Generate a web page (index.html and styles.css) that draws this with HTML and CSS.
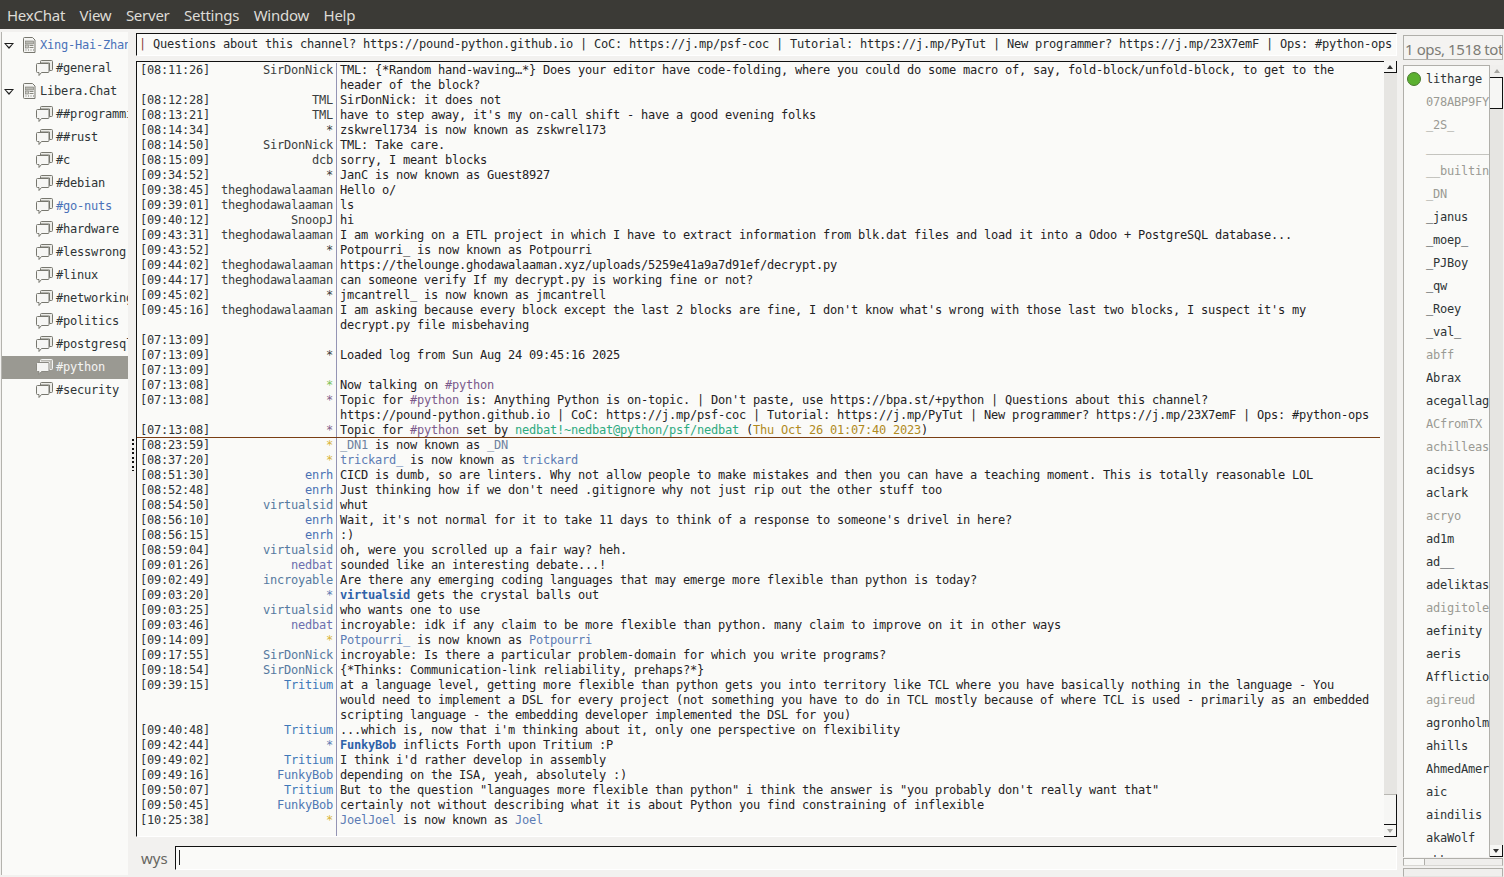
FILE: index.html
```html
<!DOCTYPE html>
<html lang="en">
<head>
<meta charset="utf-8">
<title>HexChat</title>
<link rel="stylesheet" href="styles.css">
</head>
<body>
<svg class="defs" width="0" height="0" aria-hidden="true">
  <symbol id="srv" viewBox="0 0 16 17">
    <path d="M3.500.5h8l1.500 1.500 1 1v12.500h-10.500a1 1 0 0 1-1-1V1.500a1 1 0 0 1 1-1z" fill="#f4f4f2" stroke="#77776f"/>
    <rect x="4.500" y="4" width="8" height="3" fill="#b9b9b3" stroke="#77776f" stroke-width=".6"/>
    <rect x="4.500" y="8" width="3" height="3" fill="#c9c9c3" stroke="#77776f" stroke-width=".6"/>
    <rect x="8.500" y="8" width="4" height="1" fill="#88887f"/>
    <rect x="8.500" y="10" width="4" height="1" fill="#88887f"/>
    <path d="M4.500 13h1M7 13h1M9.500 13h1M12 13h1" stroke="#77776f"/>
  </symbol>
  <symbol id="chan" viewBox="0 0 17 17">
    <path d="M4.500 3V1.500a1 1 0 0 1 1-1h10a1 1 0 0 1 1 1v8a1 1 0 0 1-1 1h-2V3z" fill="#ecece8" stroke="#77776f"/>
    <path d="M1.500 3.500h10.500a1 1 0 0 1 1 1v7a1 1 0 0 1-1 1H5.500l-2.500 3v-3H1.500a1 1 0 0 1-1-1v-7a1 1 0 0 1 1-1z" fill="#f6f6f4" stroke="#77776f"/>
  </symbol>
  <symbol id="chan-sel" viewBox="0 0 17 17">
    <path d="M4.500 3V1.500a1 1 0 0 1 1-1h10a1 1 0 0 1 1 1v8a1 1 0 0 1-1 1h-2V3z" fill="#b9b8b2" stroke="#f4f4f2"/>
    <path d="M1.500 3.500h10.500a1 1 0 0 1 1 1v7a1 1 0 0 1-1 1H5.500l-2.500 3v-3H1.500a1 1 0 0 1-1-1v-7a1 1 0 0 1 1-1z" fill="#f4f4f2" stroke="#8a8982"/>
  </symbol>
</svg>

<nav class="menubar">
  <span class="menu">HexChat</span><span class="menu">View</span><span class="menu">Server</span><span class="menu">Settings</span><span class="menu">Window</span><span class="menu">Help</span>
</nav>

<div class="main">
  <aside class="tree">
    <div class="net"><i class="exp"></i><svg class="ico16"><use href="#srv"/></svg><span class="lbl hl">Xing-Hai-Zhan</span></div>
    <div class="ch"><svg class="ico17"><use href="#chan"/></svg><span class="lbl">#general</span></div>
    <div class="net"><i class="exp"></i><svg class="ico16"><use href="#srv"/></svg><span class="lbl">Libera.Chat</span></div>
    <div class="ch"><svg class="ico17"><use href="#chan"/></svg><span class="lbl">##programming</span></div>
    <div class="ch"><svg class="ico17"><use href="#chan"/></svg><span class="lbl">##rust</span></div>
    <div class="ch"><svg class="ico17"><use href="#chan"/></svg><span class="lbl">#c</span></div>
    <div class="ch"><svg class="ico17"><use href="#chan"/></svg><span class="lbl">#debian</span></div>
    <div class="ch"><svg class="ico17"><use href="#chan"/></svg><span class="lbl hl">#go-nuts</span></div>
    <div class="ch"><svg class="ico17"><use href="#chan"/></svg><span class="lbl">#hardware</span></div>
    <div class="ch"><svg class="ico17"><use href="#chan"/></svg><span class="lbl">#lesswrong</span></div>
    <div class="ch"><svg class="ico17"><use href="#chan"/></svg><span class="lbl">#linux</span></div>
    <div class="ch"><svg class="ico17"><use href="#chan"/></svg><span class="lbl">#networking</span></div>
    <div class="ch"><svg class="ico17"><use href="#chan"/></svg><span class="lbl">#politics</span></div>
    <div class="ch"><svg class="ico17"><use href="#chan"/></svg><span class="lbl">#postgresql</span></div>
    <div class="ch sel"><svg class="ico17"><use href="#chan-sel"/></svg><span class="lbl">#python</span></div>
    <div class="ch"><svg class="ico17"><use href="#chan"/></svg><span class="lbl">#security</span></div>
  </aside>

  <div class="handle"><div class="dots"></div></div>

  <section class="center">
    <div class="topic"><span class="bar">|</span> Questions about this channel? https://pound-python.github.io | CoC: https://j.mp/psf-coc | Tutorial: https://j.mp/PyTut | New programmer? https://j.mp/23X7emF | Ops: #python-ops</div>

    <div class="chatwrap">
      <div class="chat">
        <div class="row"><span class="ts">[08:11:26]</span><span class="nick">SirDonNick</span><span class="msg">TML: {*Random hand-waving…*} Does your editor have code-folding, where you could do some macro of, say, fold-block/unfold-block, to get to the header of the block?</span></div>
        <div class="row"><span class="ts">[08:12:28]</span><span class="nick">TML</span><span class="msg">SirDonNick: it does not</span></div>
        <div class="row"><span class="ts">[08:13:21]</span><span class="nick">TML</span><span class="msg">have to step away, it's my on-call shift - have a good evening folks</span></div>
        <div class="row"><span class="ts">[08:14:34]</span><span class="nick">*</span><span class="msg">zskwrel1734 is now known as zskwrel173</span></div>
        <div class="row"><span class="ts">[08:14:50]</span><span class="nick">SirDonNick</span><span class="msg">TML: Take care.</span></div>
        <div class="row"><span class="ts">[08:15:09]</span><span class="nick">dcb</span><span class="msg">sorry, I meant blocks</span></div>
        <div class="row"><span class="ts">[09:34:52]</span><span class="nick">*</span><span class="msg">JanC is now known as Guest8927</span></div>
        <div class="row"><span class="ts">[09:38:45]</span><span class="nick">theghodawalaaman</span><span class="msg">Hello o/</span></div>
        <div class="row"><span class="ts">[09:39:01]</span><span class="nick">theghodawalaaman</span><span class="msg">ls</span></div>
        <div class="row"><span class="ts">[09:40:12]</span><span class="nick">SnoopJ</span><span class="msg">hi</span></div>
        <div class="row"><span class="ts">[09:43:31]</span><span class="nick">theghodawalaaman</span><span class="msg">I am working on a ETL project in which I have to extract information from blk.dat files and load it into a Odoo + PostgreSQL database...</span></div>
        <div class="row"><span class="ts">[09:43:52]</span><span class="nick">*</span><span class="msg">Potpourri_ is now known as Potpourri</span></div>
        <div class="row"><span class="ts">[09:44:02]</span><span class="nick">theghodawalaaman</span><span class="msg">https://thelounge.ghodawalaaman.xyz/uploads/5259e41a9a7d91ef/decrypt.py</span></div>
        <div class="row"><span class="ts">[09:44:17]</span><span class="nick">theghodawalaaman</span><span class="msg">can someone verify If my decrypt.py is working fine or not?</span></div>
        <div class="row"><span class="ts">[09:45:02]</span><span class="nick">*</span><span class="msg">jmcantrell_ is now known as jmcantrell</span></div>
        <div class="row"><span class="ts">[09:45:16]</span><span class="nick">theghodawalaaman</span><span class="msg">I am asking because every block except the last 2 blocks are fine, I don't know what's wrong with those last two blocks, I suspect it's my decrypt.py file misbehaving</span></div>
        <div class="row"><span class="ts">[07:13:09]</span><span class="nick"></span><span class="msg">&nbsp;</span></div>
        <div class="row"><span class="ts">[07:13:09]</span><span class="nick">*</span><span class="msg">Loaded log from Sun Aug 24 09:45:16 2025</span></div>
        <div class="row"><span class="ts">[07:13:09]</span><span class="nick"></span><span class="msg">&nbsp;</span></div>
        <div class="row"><span class="ts">[07:13:08]</span><span class="nick s-green">*</span><span class="msg">Now talking on <span class="chn">#python</span></span></div>
        <div class="row"><span class="ts">[07:13:08]</span><span class="nick s-purple">*</span><span class="msg">Topic for <span class="chn">#python</span> is: Anything Python is on-topic. | Don't paste, use https://bpa.st/+python | Questions about this channel? <span class="url">https://pound-python.github.io</span> | CoC: https://j.mp/psf-coc | Tutorial: https://j.mp/PyTut | New programmer? https://j.mp/23X7emF | Ops: #python-ops</span></div>
        <div class="row"><span class="ts">[07:13:08]</span><span class="nick s-purple">*</span><span class="msg">Topic for <span class="chn">#python</span> set by <span class="who">nedbat!~nedbat@python/psf/nedbat</span> (<span class="when">Thu Oct 26 01:07:40 2023</span>)</span></div>
        <div class="row mark"><span class="ts">[08:23:59]</span><span class="nick s-yellow">*</span><span class="msg"><span class="n-a">_DN1</span> is now known as <span class="n-a">_DN</span></span></div>
        <div class="row"><span class="ts">[08:37:20]</span><span class="nick s-yellow">*</span><span class="msg"><span class="n-b">trickard_</span> is now known as <span class="n-b">trickard</span></span></div>
        <div class="row"><span class="ts">[08:51:30]</span><span class="nick n-e">enrh</span><span class="msg">CICD is dumb, so are linters. Why not allow people to make mistakes and then you can have a teaching moment. This is totally reasonable LOL</span></div>
        <div class="row"><span class="ts">[08:52:48]</span><span class="nick n-e">enrh</span><span class="msg">Just thinking how if we don't need .gitignore why not just rip out the other stuff too</span></div>
        <div class="row"><span class="ts">[08:54:50]</span><span class="nick n-v">virtualsid</span><span class="msg">whut</span></div>
        <div class="row"><span class="ts">[08:56:10]</span><span class="nick n-e">enrh</span><span class="msg">Wait, it's not normal for it to take 11 days to think of a response to someone's drivel in here?</span></div>
        <div class="row"><span class="ts">[08:56:15]</span><span class="nick n-e">enrh</span><span class="msg">:)</span></div>
        <div class="row"><span class="ts">[08:59:04]</span><span class="nick n-v">virtualsid</span><span class="msg">oh, were you scrolled up a fair way? heh.</span></div>
        <div class="row"><span class="ts">[09:01:26]</span><span class="nick n-n">nedbat</span><span class="msg">sounded like an interesting debate...!</span></div>
        <div class="row"><span class="ts">[09:02:49]</span><span class="nick n-v">incroyable</span><span class="msg">Are there any emerging coding languages that may emerge more flexible than python is today?</span></div>
        <div class="row"><span class="ts">[09:03:20]</span><span class="nick s-blue">*</span><span class="msg"><b class="act">virtualsid</b> gets the crystal balls out</span></div>
        <div class="row"><span class="ts">[09:03:25]</span><span class="nick n-v">virtualsid</span><span class="msg">who wants one to use</span></div>
        <div class="row"><span class="ts">[09:03:46]</span><span class="nick n-n">nedbat</span><span class="msg">incroyable: idk if any claim to be more flexible than python. many claim to improve on it in other ways</span></div>
        <div class="row"><span class="ts">[09:14:09]</span><span class="nick s-yellow">*</span><span class="msg"><span class="n-b">Potpourri_</span> is now known as <span class="n-b">Potpourri</span></span></div>
        <div class="row"><span class="ts">[09:17:55]</span><span class="nick n-v">SirDonNick</span><span class="msg">incroyable: Is there a particular problem-domain for which you write programs?</span></div>
        <div class="row"><span class="ts">[09:18:54]</span><span class="nick n-v">SirDonNick</span><span class="msg">{*Thinks: Communication-link reliability, prehaps?*}</span></div>
        <div class="row"><span class="ts">[09:39:15]</span><span class="nick n-t">Tritium</span><span class="msg">at a language level, getting more flexible than python gets you into territory like TCL where you have basically nothing in the language - You would need to implement a DSL for every project (not something you have to do in TCL mostly because of where TCL is used - primarily as an embedded scripting language - the embedding developer implemented the DSL for you)</span></div>
        <div class="row"><span class="ts">[09:40:48]</span><span class="nick n-t">Tritium</span><span class="msg">...which is, now that i'm thinking about it, only one perspective on flexibility</span></div>
        <div class="row"><span class="ts">[09:42:44]</span><span class="nick s-blue">*</span><span class="msg"><b class="act">FunkyBob</b> inflicts Forth upon Tritium :P</span></div>
        <div class="row"><span class="ts">[09:49:02]</span><span class="nick n-t">Tritium</span><span class="msg">I think i'd rather develop in assembly</span></div>
        <div class="row"><span class="ts">[09:49:16]</span><span class="nick n-f">FunkyBob</span><span class="msg">depending on the ISA, yeah, absolutely :)</span></div>
        <div class="row"><span class="ts">[09:50:07]</span><span class="nick n-t">Tritium</span><span class="msg">But to the question "languages more flexible than python" i think the answer is "you probably don't really want that"</span></div>
        <div class="row"><span class="ts">[09:50:45]</span><span class="nick n-f">FunkyBob</span><span class="msg">certainly not without describing what it is about Python you find constraining of inflexible</span></div>
        <div class="row"><span class="ts">[10:25:38]</span><span class="nick s-yellow">*</span><span class="msg"><span class="n-b">JoelJoel</span> is now known as <span class="n-b">Joel</span></span></div>
        <div class="row fill"><span class="ts"></span><span class="nick"></span><span class="msg"></span></div>
      </div>
      <div class="vscroll">
        <div class="sbtn up"><i class="tri-up"></i></div>
        <div class="trough"></div>
        <div class="thumb"></div>
        <div class="sbtn down"><i class="tri-down dim"></i></div>
      </div>
    </div>

    <div class="inputbar">
      <span class="mynick">wys</span>
      <div class="entry"><i class="caret"></i></div>
    </div>
  </section>

  <aside class="side">
    <div class="count"><span>1 ops, 1518 total</span></div>
    <div class="userwrap">
      <div class="users">
        <div class="u"><i class="dot"></i><span>litharge</span></div>
        <div class="u away"><span>078ABP9FY</span></div>
        <div class="u away"><span>_2S_</span></div>
        <div class="u away"><span>____________</span></div>
        <div class="u away"><span>__builtin__</span></div>
        <div class="u away"><span>_DN</span></div>
        <div class="u"><span>_janus</span></div>
        <div class="u"><span>_moep_</span></div>
        <div class="u"><span>_PJBoy</span></div>
        <div class="u"><span>_qw</span></div>
        <div class="u"><span>_Roey</span></div>
        <div class="u"><span>_val_</span></div>
        <div class="u away"><span>abff</span></div>
        <div class="u"><span>Abrax</span></div>
        <div class="u"><span>acegallagher</span></div>
        <div class="u away"><span>ACfromTX</span></div>
        <div class="u away"><span>achilleas</span></div>
        <div class="u"><span>acidsys</span></div>
        <div class="u"><span>aclark</span></div>
        <div class="u away"><span>acryo</span></div>
        <div class="u"><span>ad1m</span></div>
        <div class="u"><span>ad__</span></div>
        <div class="u"><span>adeliktas</span></div>
        <div class="u away"><span>adigitoler</span></div>
        <div class="u"><span>aefinity</span></div>
        <div class="u"><span>aeris</span></div>
        <div class="u"><span>Afflictions</span></div>
        <div class="u away"><span>agireud</span></div>
        <div class="u"><span>agronholm</span></div>
        <div class="u"><span>ahills</span></div>
        <div class="u"><span>AhmedAmer</span></div>
        <div class="u"><span>aic</span></div>
        <div class="u"><span>aindilis</span></div>
        <div class="u"><span>akaWolf</span></div>
        <div class="u"><span>akk</span></div>
      </div>
      <div class="vscroll small">
        <div class="sbtn up"><i class="tri-up dim"></i></div>
        <div class="thumb top"></div>
        <div class="trough"></div>
        <div class="sbtn down"><i class="tri-down"></i></div>
      </div>
    </div>
    <div class="hscroll"><div class="hthumb"></div></div>
    <div class="hostbox"></div>
  </aside>
</div>
</body>
</html>
```

FILE: styles.css
```css
* { box-sizing: border-box; }
html, body { margin: 0; height: 877px; overflow: hidden; }
body {
  display: flex;
  flex-direction: column;
  background: #f2f1ef;
  color: #2e3436;
  font-family: "DejaVu Sans Mono", monospace;
  font-size: 12px;
  letter-spacing: -0.224px;
  line-height: 15px;
}
.defs { position: absolute; }

.menubar {
  flex: none;
  height: 29px;
  background: #3b3a36;
  display: flex;
  align-items: center;
  padding: 2px 0 0 0;
  font-family: "Noto Sans", sans-serif;
  font-size: 15px;
  letter-spacing: -0.25px;
  color: #dedcd6;
}
.menu { padding: 0 7px; margin-right: 0.5px; }

.main { flex: 1; display: flex; min-height: 0; }

.tree {
  flex: none;
  width: 127px;
  margin: 3px 1px 2px 1px;
  background: #fafaf8;
  border-left: 1px solid #b4b3ae;
  padding-top: 2px;
  overflow: hidden;
}
.net, .ch {
  height: 23px;
  display: flex;
  align-items: center;
  white-space: nowrap;
  overflow: hidden;
}
.net { padding-left: 2px; }
.ch { padding-left: 34px; }
.exp {
  flex: none;
  width: 0; height: 0;
  border-left: 5px solid transparent;
  border-right: 5px solid transparent;
  border-top: 6px solid #1c1c1c;
  margin-right: 7px;
  position: relative;
}
.exp::after {
  content: "";
  position: absolute;
  left: -3px; top: -5px;
  width: 0; height: 0;
  border-left: 3px solid transparent;
  border-right: 3px solid transparent;
  border-top: 3.600px solid #fafaf8;
}
.ico16 { flex: none; width: 16px; height: 17px; margin-right: 3px; }
.ico17 { flex: none; width: 17px; height: 17px; margin-right: 3px; }
.lbl { color: #2e3436; }
.lbl.hl { color: #4a72b8; }
.sel { background: #9a9992; }
.sel .lbl { color: #f4f4f2; }

.handle { flex: none; width: 7px; display: flex; align-items: center; justify-content: center; }
.dots {
  width: 2px;
  height: 32px;
  margin-top: 4px;
  background: repeating-linear-gradient(to bottom, #111 0 2px, transparent 2px 4.500px);
}

.center { flex: none; width: 1261px; display: flex; flex-direction: column; padding-top: 4px; }
.topic {
  flex: none;
  height: 23px;
  border-top: 1.500px solid #111;
  border-left: 1px solid #111;
  border-right: 1px solid #fff;
  border-bottom: 1px solid #fff;
  background: #fafaf8;
  padding: 3px 0 0 2px;
  white-space: nowrap;
  overflow: hidden;
  color: #26292b;
}
.bar { color: #8a3a3a; }

.chatwrap { flex: none; height: 776px; margin-top: 5px; display: flex; }
.chat {
  flex: 1;
  min-width: 0;
  display: flex;
  flex-direction: column;
  background: #fafaf8;
  border-top: 1px solid #111;
  border-left: 1px solid #111;
  border-bottom: 1px solid #fff;
  padding-top: 1px;
}
.row { display: flex; flex: none; padding-left: 3px; }
.row.fill { flex: 1; }
.row.mark { box-shadow: 0 -1px 0 #7a3e14; margin-right: 4px; margin-left: 0; }
.row.mark .msg { padding-right: 8px; }
.ts { flex: none; width: 70px; color: #2e3436; }
.nick { flex: none; width: 126px; text-align: right; padding-right: 3px; white-space: nowrap; color: #3a3e40; }
.msg {
  flex: 1;
  min-width: 0;
  border-left: 1px solid #9494b4;
  padding: 0 12px 0 3px;
  color: #1f2224;
}
.url { white-space: nowrap; }
.chn { color: #7c5a8c; }
.who { color: #2eaa80; }
.when { color: #b08a1e; }
.s-green { color: #7cc25c; }
.s-purple { color: #80608c; }
.s-yellow { color: #d8b53c; }
.s-blue { color: #5c7cb4; }
.n-a { color: #6f82a0; }
.n-b { color: #5c7cb4; }
.n-e { color: #4a72b4; }
.n-v { color: #55799f; }
.n-n { color: #6c70ae; }
.n-t { color: #3f78b8; }
.n-f { color: #4f78b4; }
.act { color: #2f62a8; font-weight: bold; }

.vscroll { flex: none; width: 13px; display: flex; flex-direction: column; background: #e6e5e2; }
.trough { flex: 1; background: #e6e5e2; }
.sbtn {
  flex: none;
  height: 12px;
  background: #f6f6f4;
  border-right: 1px solid #111;
  border-bottom: 1px solid #111;
  display: flex;
  align-items: center;
  justify-content: center;
}
.thumb {
  flex: none;
  height: 31px;
  background: #f6f6f4;
  border-top: 1px solid #b8b7b2;
  border-right: 1px solid #111;
  border-bottom: 1px solid #111;
}
.tri-up, .tri-down {
  width: 0; height: 0;
  border-left: 3.500px solid transparent;
  border-right: 3.500px solid transparent;
}
.tri-up { border-bottom: 4px solid #333; }
.tri-down { border-top: 4px solid #333; }
.tri-up.dim { border-bottom-color: #a5a4a0; }
.tri-down.dim { border-top-color: #a5a4a0; }

.inputbar { flex: none; display: flex; align-items: stretch; margin-top: 9px; }
.mynick {
  flex: none;
  width: 39px;
  padding: 2px 0 0 5px;
  font-family: "Noto Sans", sans-serif;
  font-size: 15px;
  letter-spacing: 0;
  line-height: 20px;
  color: #67665f;
}
.entry {
  flex: 1;
  height: 24px;
  background: #fafaf8;
  border-top: 1.500px solid #111;
  border-left: 1px solid #111;
  border-right: 1px solid #fff;
  border-bottom: 1px solid #fff;
  padding: 3px 0 0 3px;
}
.caret { display: block; width: 1px; height: 15px; background: #222; }

.side { flex: none; width: 100px; margin-left: 6px; display: flex; flex-direction: column; padding-top: 6px; }
.count {
  flex: none;
  height: 25px;
  border: 1px solid #b0afaa;
  background: #f4f3f1;
  overflow: hidden;
  white-space: nowrap;
  font-family: "Noto Sans", sans-serif;
  font-size: 15px;
  letter-spacing: -0.4px;
  line-height: 24px;
  padding: 1px 0 0 1px;
  color: #7d7c76;
}
.userwrap { flex: none; height: 792px; margin-top: 5px; display: flex; }
.users {
  flex: none;
  width: 87px;
  background: #fafaf8;
  border-top: 1px solid #b0afaa;
  border-left: 1px solid #b0afaa;
  border-right: 1px solid #b0afaa;
  padding-top: 2px;
  overflow: hidden;
}
.u {
  height: 23px;
  display: flex;
  align-items: center;
  padding-left: 22px;
  white-space: nowrap;
  overflow: hidden;
  color: #2e3436;
  position: relative;
}
.u span { display: block; }
.u.away { color: #9a9a94; }
.dot {
  position: absolute;
  left: 3px; top: 4px;
  width: 14px; height: 14px;
  border-radius: 50%;
  background: #5bb030;
  border: 1px solid #4a7a30;
}
.small .thumb.top { border-top: 1px solid #111; height: 32px; }
.small .sbtn.up { background: #f0efed; border-right: 0; border-bottom: 0; height: 12px; }
.hscroll { flex: none; height: 8px; margin-top: 1px; border: 1px solid #b0afaa; border-bottom-color: #d8d7d3; background: #efeeec; }
.hthumb { width: 21px; height: 100%; background: #f8f8f6; border-right: 1px solid #b0afaa; }
.hostbox { flex: none; height: 9px; margin-top: 2px; border: 1px solid #b0afaa; border-bottom-color: #e4e3e0; background: #f0efed; }
```
